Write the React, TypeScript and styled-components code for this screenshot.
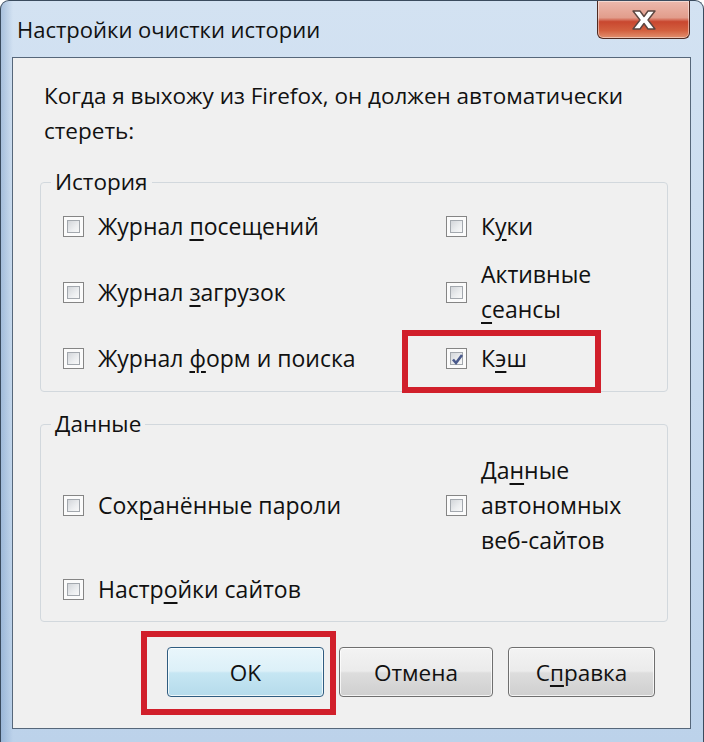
import React from 'react';
import styled, { createGlobalStyle } from 'styled-components';

const GlobalStyle = createGlobalStyle`
  html, body {
    margin: 0;
    padding: 0;
    background: #ffffff;
  }
  body {
    font-family: "Open Sans", "Noto Sans", "DejaVu Sans", sans-serif;
    color: #111;
  }
`;

/**
 * * window frame
 */
const Window = styled.div`
  width: 704px;
  height: 742px;
  box-sizing: border-box;
  display: flex;
  flex-direction: column;
  border: 1px solid #3a4b5e;
  border-bottom: none;
  border-radius: 9px 9px 0 0;
  overflow: hidden;
  background:
    linear-gradient(90deg, rgba(90, 130, 180, 0.35) 0, rgba(90, 130, 180, 0) 12px),
    linear-gradient(180deg, #d3e2f2 0%, #cadcef 40%, #bcd2ea 100%);
`;

const TitleBar = styled.div`
  height: 56px;
  flex: none;
  display: flex;
  align-items: flex-start;
  justify-content: space-between;
`;

const Title = styled.div`
  padding: 11px 0 0 16px;
  font-size: 22px;
  line-height: 34px;
  color: #111;
`;

const CloseButton = styled.div`
  width: 93px;
  height: 38px;
  margin-right: 13px;
  box-sizing: border-box;
  border: 1px solid #4e2a22;
  border-top: none;
  border-radius: 0 0 6px 6px;
  background: linear-gradient(180deg, #ecb9ad 0%, #e29d8c 45%, #c9472f 56%, #d3603f 80%, #e2906f 100%);
  box-shadow: inset 0 0 0 1px rgba(255, 255, 255, 0.45);
  display: flex;
  align-items: center;
  justify-content: center;
`;

const Client = styled.div`
  flex: 1;
  margin: 0 12px 13px 11px;
  border: 1px solid #56677a;
  background: #f0f0f0;
  padding: 20px 22px 0 27px;
  display: flex;
  flex-direction: column;
`;

const Intro = styled.p`
  margin: 0 0 0 4px;
  font-size: 22.5px;
  line-height: 35px;
`;

/**
 * * group boxes
 */
const Group = styled.fieldset<{ $top: number; $pad: number }>`
  margin: ${p => p.$top}px 0 0 0;
  padding: ${p => p.$pad}px 0 0 22px;
  border: 1px solid #d2d8dd;
  border-radius: 4px;
  min-width: 0;
`;

const Legend = styled.legend`
  margin-left: -12px;
  padding: 0 4px;
  font-size: 22.5px;
  line-height: 22px;
`;

const Grid = styled.div<{ $rows: string }>`
  display: grid;
  grid-template-columns: 383px 1fr;
  grid-template-rows: ${p => p.$rows};
`;

const Cell = styled.div`
  position: relative;
  display: flex;
  align-items: center;
  gap: 14px;
`;

const Label = styled.span`
  font-size: 23px;
  line-height: 35px;
  white-space: pre-line;

  u {
    text-decoration-thickness: 2px;
    text-underline-offset: 4px;
  }
`;

const Box = styled.span`
  flex: none;
  width: 21px;
  height: 21px;
  box-sizing: border-box;
  border: 1px solid #858585;
  background: #fbfbfb;
  padding: 3px;
  display: flex;
`;

const BoxInner = styled.span`
  flex: 1;
  position: relative;
  border: 1px solid #a3a8ae;
  background: linear-gradient(135deg, #d3d6da 0%, #eceef0 60%, #f8f8f8 100%);
`;

const Highlight = styled.div<{ $t: number; $r: number; $b: number; $l: number }>`
  position: absolute;
  top: ${p => p.$t}px;
  right: ${p => p.$r}px;
  bottom: ${p => p.$b}px;
  left: ${p => p.$l}px;
  border: 6px solid #d11f2b;
  pointer-events: none;
`;

/**
 * * buttons
 */
const Buttons = styled.div`
  margin-top: 25px;
  padding-right: 13px;
  display: flex;
  justify-content: flex-end;
  gap: 15px;
`;

const ButtonWrap = styled.div`
  position: relative;
  display: flex;
`;

const Button = styled.button<{ $default?: boolean; $w: number }>`
  width: ${p => p.$w}px;
  height: 50px;
  box-sizing: border-box;
  border: 1px solid ${p => (p.$default ? '#2f5c80' : '#6f6f6f')};
  border-radius: 4px;
  background: ${p =>
    p.$default
      ? 'linear-gradient(180deg, #e9f6fb 0%, #dcf0f8 48%, #c6e6f3 52%, #b5dbeb 100%)'
      : 'linear-gradient(180deg, #f3f3f3 0%, #ebebeb 48%, #dddddd 52%, #cfcfcf 100%)'};
  box-shadow: inset 0 0 0 1px rgba(255, 255, 255, 0.75);
  font-family: inherit;
  font-size: 22.5px;
  color: #111;
  padding: 0;

  u {
    text-decoration-thickness: 2px;
    text-underline-offset: 4px;
  }
`;

type CheckProps = {
  label: React.ReactNode
  checked?: boolean
  children?: React.ReactNode
}

const Check = ({ label, checked, children }: CheckProps) => (
  <Cell>
    <Box>
      <BoxInner>
        {checked && (
          <svg width="13" height="13" viewBox="0 0 13 13" style={{ position: 'absolute', left: 0, top: 0 }}>
            <path d="M2 6.5 L5 10 L11 2" fill="none" stroke="#4a5a8c" strokeWidth="2.6" />
          </svg>
        )}
      </BoxInner>
    </Box>
    <Label>{label}</Label>
    {children}
  </Cell>
);

export default function App() {
  return (
    <>
      <GlobalStyle />
      <Window>
        <TitleBar>
          <Title>Настройки очистки истории</Title>
          <CloseButton>
            <svg width="30" height="24" viewBox="0 0 30 24">
              <path
                d="M4 3 H11 L15 8.5 L19 3 H26 L19 12 L26 21 H19 L15 15.5 L11 21 H4 L11 12 Z"
                fill="#ffffff"
                stroke="#5b4640"
                strokeWidth="1.4"
                strokeLinejoin="round"
              />
            </svg>
          </CloseButton>
        </TitleBar>
        <Client>
          <Intro>
            Когда я выхожу из Firefox, он должен автоматически
            <br />
            стереть:
          </Intro>

          <Group $top={23} $pad={0}>
            <Legend>История</Legend>
            <Grid $rows="66px 66px 66px">
              <Check label={<>Журнал <u>п</u>осещений</>} />
              <Check label={<>К<u>у</u>ки</>} />
              <Check label={<>Журнал <u>з</u>агрузок</>} />
              <Check label={<>Активные{'\n'}<u>с</u>еансы</>} />
              <Check label={<>Журнал <u>ф</u>орм и поиска</>} />
              <Check label={<>К<u>э</u>ш</>} checked>
                <Highlight $t={5} $r={66} $b={-2} $l={-44} />
              </Check>
            </Grid>
          </Group>

          <Group $top={21} $pad={18}>
            <Legend>Данные</Legend>
            <Grid $rows="105px 63px">
              <Check label={<>Сох<u>р</u>анённые пароли</>} />
              <Check label={<>Да<u>н</u>ные{'\n'}автономных{'\n'}веб-сайтов</>} />
              <Check label={<>Настр<u>о</u>йки сайтов</>} />
            </Grid>
          </Group>

          <Buttons>
            <ButtonWrap>
              <Button $default $w={157}>OK</Button>
              <Highlight $t={-16} $r={-12} $b={-18} $l={-26} />
            </ButtonWrap>
            <Button $w={154}>Отмена</Button>
            <Button $w={147}>С<u>п</u>равка</Button>
          </Buttons>
        </Client>
      </Window>
    </>
  );
}
